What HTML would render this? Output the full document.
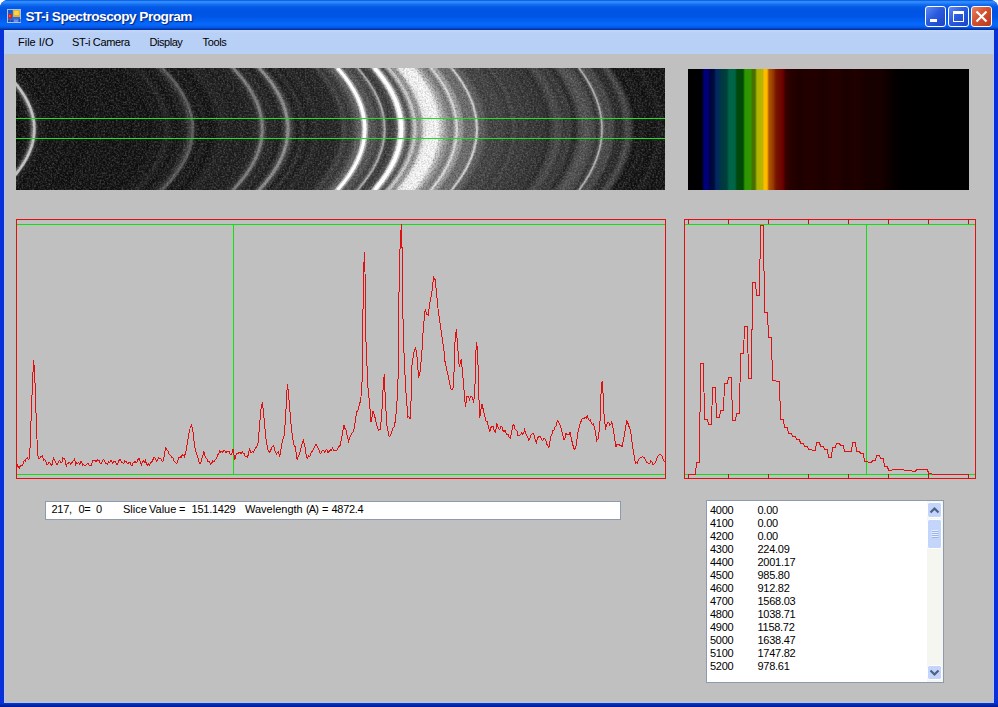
<!DOCTYPE html>
<html><head><meta charset="utf-8"><title>ST-i Spectroscopy Program</title>
<style>
html,body{margin:0;padding:0;}
body{width:998px;height:707px;overflow:hidden;background:#fff;font-family:"Liberation Sans",sans-serif;position:relative;}
#win{position:absolute;left:0;top:0;width:998px;height:707px;background:#0831d9;border-radius:8px 8px 0 0;overflow:hidden;}
#title{position:absolute;left:0;top:0;width:998px;height:30px;background:linear-gradient(to bottom,#0550d8 0%,#2c8cff 5%,#2a88fc 9%,#146ef0 15%,#0559e6 24%,#0054e3 36%,#0055e5 55%,#025ff2 68%,#0668fc 80%,#0562f4 87%,#0552dc 93%,#0038b4 97%,#002a9c 100%);}
#ttext{position:absolute;left:25.5px;top:8.4px;font-size:13.7px;font-weight:bold;color:#fff;text-shadow:1px 1px 1px #0a1f7a;white-space:nowrap;letter-spacing:-0.52px;line-height:18px;}
#client{position:absolute;left:4px;top:30px;width:990px;height:673px;background:#c0c0c0;}
#menu{position:absolute;left:4px;top:30px;width:990px;height:24px;background:linear-gradient(to bottom,#c6d8f8 0px,#b9d0f6 3px,#b8cff6 100%);}
.mi{position:absolute;top:36px;font-size:11px;color:#000;white-space:nowrap;line-height:13px;}
.tb{position:absolute;top:6px;width:21px;height:21px;box-sizing:border-box;border:1px solid #fff;border-radius:3px;}
#tbox{position:absolute;left:45px;top:501px;width:576px;height:19px;box-sizing:border-box;border:1px solid #8c9bb0;background:#fff;}
.w{position:absolute;top:503px;font-size:11px;line-height:13px;color:#000;white-space:nowrap;}
#list{position:absolute;left:706px;top:500px;width:238px;height:183px;box-sizing:border-box;border:1px solid #8c9bb0;background:#fff;overflow:hidden;}
.li{position:absolute;left:3px;letter-spacing:-0.27px;font-size:11px;line-height:13px;color:#000;white-space:nowrap;}
.li .a{position:absolute;left:0;}
.li .b{position:absolute;left:47.5px;}
svg{position:absolute;left:0;top:0;}
</style></head><body>
<div id="win">
<div id="title"></div>
<div id="client"></div>
<div style="position:absolute;left:0;top:703px;width:998px;height:4px;background:linear-gradient(to bottom,#0a3ad0,#0426b0 50%,#001a90)"></div>
<div style="position:absolute;left:4px;top:30px;width:1px;height:673px;background:#b0c4ee"></div><div style="position:absolute;left:4px;top:702px;width:990px;height:1px;background:#b0c4ee"></div><div style="position:absolute;left:993px;top:30px;width:1px;height:673px;background:#b0c4ee"></div>
<div id="menu"></div>
<div id="ttext">ST-i Spectroscopy Program</div>
<div class="mi" style="left:18px">File I/O</div>
<div class="mi" style="left:72px;letter-spacing:-0.36px">ST-i Camera</div>
<div class="mi" style="left:149.5px;letter-spacing:-0.45px">Display</div>
<div class="mi" style="left:202.5px;letter-spacing:-0.33px">Tools</div>
<div class="tb" style="left:925px;background:linear-gradient(135deg,#5f8bf0 0%,#2a5be0 45%,#1c44c4 100%)"></div>
<div class="tb" style="left:948px;background:linear-gradient(135deg,#5f8bf0 0%,#2a5be0 45%,#1c44c4 100%)"></div>
<div class="tb" style="left:971px;background:linear-gradient(135deg,#e8836a 0%,#d4502e 45%,#b8391d 100%)"></div>
<div id="tbox"></div>
<div class="w" style="left:51.5px;letter-spacing:-0.25px">217,</div>
<div class="w" style="left:78.5px;letter-spacing:-0.3px">0=</div>
<div class="w" style="left:96px">0</div>
<div class="w" style="left:123px">Slice</div>
<div class="w" style="left:149px">Value</div>
<div class="w" style="left:179px">=</div>
<div class="w" style="left:191.5px;letter-spacing:-0.24px">151.1429</div>
<div class="w" style="left:245px">Wavelength</div>
<div class="w" style="left:306px;letter-spacing:-0.9px">(A)</div>
<div class="w" style="left:322px">=</div>
<div class="w" style="left:331.5px;letter-spacing:-0.3px">4872.4</div>
<div id="list"><div class="li" style="top:3px"><span class="a">4000</span><span class="b">0.00</span></div><div class="li" style="top:16px"><span class="a">4100</span><span class="b">0.00</span></div><div class="li" style="top:29px"><span class="a">4200</span><span class="b">0.00</span></div><div class="li" style="top:42px"><span class="a">4300</span><span class="b">224.09</span></div><div class="li" style="top:55px"><span class="a">4400</span><span class="b">2001.17</span></div><div class="li" style="top:68px"><span class="a">4500</span><span class="b">985.80</span></div><div class="li" style="top:81px"><span class="a">4600</span><span class="b">912.82</span></div><div class="li" style="top:94px"><span class="a">4700</span><span class="b">1568.03</span></div><div class="li" style="top:107px"><span class="a">4800</span><span class="b">1038.71</span></div><div class="li" style="top:120px"><span class="a">4900</span><span class="b">1158.72</span></div><div class="li" style="top:133px"><span class="a">5000</span><span class="b">1638.47</span></div><div class="li" style="top:146px"><span class="a">5100</span><span class="b">1747.82</span></div><div class="li" style="top:159px"><span class="a">5200</span><span class="b">978.61</span></div></div>
<svg width="998" height="707" viewBox="0 0 998 707">
<defs>
<linearGradient id="sg" gradientUnits="userSpaceOnUse" x1="16" y1="0" x2="666" y2="0"><stop offset="0.0000" stop-color="rgb(15,15,15)"/><stop offset="0.0015" stop-color="rgb(14,14,14)"/><stop offset="0.0031" stop-color="rgb(11,11,11)"/><stop offset="0.0046" stop-color="rgb(10,10,10)"/><stop offset="0.0062" stop-color="rgb(10,10,10)"/><stop offset="0.0077" stop-color="rgb(12,12,12)"/><stop offset="0.0092" stop-color="rgb(13,13,13)"/><stop offset="0.0108" stop-color="rgb(15,15,15)"/><stop offset="0.0123" stop-color="rgb(16,16,16)"/><stop offset="0.0138" stop-color="rgb(18,18,18)"/><stop offset="0.0154" stop-color="rgb(20,20,20)"/><stop offset="0.0169" stop-color="rgb(21,21,21)"/><stop offset="0.0185" stop-color="rgb(22,22,22)"/><stop offset="0.0200" stop-color="rgb(28,28,28)"/><stop offset="0.0215" stop-color="rgb(46,46,46)"/><stop offset="0.0231" stop-color="rgb(77,77,77)"/><stop offset="0.0246" stop-color="rgb(115,115,115)"/><stop offset="0.0262" stop-color="rgb(144,144,144)"/><stop offset="0.0277" stop-color="rgb(150,150,150)"/><stop offset="0.0292" stop-color="rgb(130,130,130)"/><stop offset="0.0308" stop-color="rgb(93,93,93)"/><stop offset="0.0323" stop-color="rgb(56,56,56)"/><stop offset="0.0338" stop-color="rgb(33,33,33)"/><stop offset="0.0354" stop-color="rgb(24,24,24)"/><stop offset="0.0369" stop-color="rgb(23,23,23)"/><stop offset="0.0385" stop-color="rgb(25,25,25)"/><stop offset="0.0400" stop-color="rgb(25,25,25)"/><stop offset="0.0415" stop-color="rgb(23,23,23)"/><stop offset="0.0431" stop-color="rgb(21,21,21)"/><stop offset="0.0446" stop-color="rgb(18,18,18)"/><stop offset="0.0462" stop-color="rgb(17,17,17)"/><stop offset="0.0477" stop-color="rgb(15,15,15)"/><stop offset="0.0492" stop-color="rgb(15,15,15)"/><stop offset="0.0508" stop-color="rgb(15,15,15)"/><stop offset="0.0523" stop-color="rgb(15,15,15)"/><stop offset="0.0538" stop-color="rgb(14,14,14)"/><stop offset="0.0554" stop-color="rgb(15,15,15)"/><stop offset="0.0569" stop-color="rgb(18,18,18)"/><stop offset="0.0585" stop-color="rgb(20,20,20)"/><stop offset="0.0600" stop-color="rgb(19,19,19)"/><stop offset="0.0615" stop-color="rgb(16,16,16)"/><stop offset="0.0631" stop-color="rgb(16,16,16)"/><stop offset="0.0646" stop-color="rgb(16,16,16)"/><stop offset="0.0662" stop-color="rgb(17,17,17)"/><stop offset="0.0677" stop-color="rgb(17,17,17)"/><stop offset="0.0692" stop-color="rgb(17,17,17)"/><stop offset="0.0708" stop-color="rgb(20,20,20)"/><stop offset="0.0723" stop-color="rgb(21,21,21)"/><stop offset="0.0738" stop-color="rgb(21,21,21)"/><stop offset="0.0754" stop-color="rgb(18,18,18)"/><stop offset="0.0769" stop-color="rgb(15,15,15)"/><stop offset="0.0785" stop-color="rgb(13,13,13)"/><stop offset="0.0800" stop-color="rgb(14,14,14)"/><stop offset="0.0815" stop-color="rgb(15,15,15)"/><stop offset="0.0831" stop-color="rgb(15,15,15)"/><stop offset="0.0846" stop-color="rgb(16,16,16)"/><stop offset="0.0862" stop-color="rgb(17,17,17)"/><stop offset="0.0877" stop-color="rgb(20,20,20)"/><stop offset="0.0892" stop-color="rgb(20,20,20)"/><stop offset="0.0908" stop-color="rgb(18,18,18)"/><stop offset="0.0923" stop-color="rgb(15,15,15)"/><stop offset="0.0938" stop-color="rgb(14,14,14)"/><stop offset="0.0954" stop-color="rgb(15,15,15)"/><stop offset="0.0969" stop-color="rgb(15,15,15)"/><stop offset="0.0985" stop-color="rgb(15,15,15)"/><stop offset="0.1000" stop-color="rgb(16,16,16)"/><stop offset="0.1015" stop-color="rgb(16,16,16)"/><stop offset="0.1031" stop-color="rgb(15,15,15)"/><stop offset="0.1046" stop-color="rgb(14,14,14)"/><stop offset="0.1062" stop-color="rgb(13,13,13)"/><stop offset="0.1077" stop-color="rgb(14,14,14)"/><stop offset="0.1092" stop-color="rgb(13,13,13)"/><stop offset="0.1108" stop-color="rgb(13,13,13)"/><stop offset="0.1123" stop-color="rgb(13,13,13)"/><stop offset="0.1138" stop-color="rgb(13,13,13)"/><stop offset="0.1154" stop-color="rgb(14,14,14)"/><stop offset="0.1169" stop-color="rgb(16,16,16)"/><stop offset="0.1185" stop-color="rgb(18,18,18)"/><stop offset="0.1200" stop-color="rgb(19,19,19)"/><stop offset="0.1215" stop-color="rgb(19,19,19)"/><stop offset="0.1231" stop-color="rgb(18,18,18)"/><stop offset="0.1246" stop-color="rgb(18,18,18)"/><stop offset="0.1262" stop-color="rgb(18,18,18)"/><stop offset="0.1277" stop-color="rgb(17,17,17)"/><stop offset="0.1292" stop-color="rgb(17,17,17)"/><stop offset="0.1308" stop-color="rgb(17,17,17)"/><stop offset="0.1323" stop-color="rgb(18,18,18)"/><stop offset="0.1338" stop-color="rgb(19,19,19)"/><stop offset="0.1354" stop-color="rgb(19,19,19)"/><stop offset="0.1369" stop-color="rgb(18,18,18)"/><stop offset="0.1385" stop-color="rgb(17,17,17)"/><stop offset="0.1400" stop-color="rgb(16,16,16)"/><stop offset="0.1415" stop-color="rgb(17,17,17)"/><stop offset="0.1431" stop-color="rgb(17,17,17)"/><stop offset="0.1446" stop-color="rgb(18,18,18)"/><stop offset="0.1462" stop-color="rgb(17,17,17)"/><stop offset="0.1477" stop-color="rgb(17,17,17)"/><stop offset="0.1492" stop-color="rgb(16,16,16)"/><stop offset="0.1508" stop-color="rgb(16,16,16)"/><stop offset="0.1523" stop-color="rgb(16,16,16)"/><stop offset="0.1538" stop-color="rgb(15,15,15)"/><stop offset="0.1554" stop-color="rgb(15,15,15)"/><stop offset="0.1569" stop-color="rgb(17,17,17)"/><stop offset="0.1585" stop-color="rgb(18,18,18)"/><stop offset="0.1600" stop-color="rgb(19,19,19)"/><stop offset="0.1615" stop-color="rgb(19,19,19)"/><stop offset="0.1631" stop-color="rgb(17,17,17)"/><stop offset="0.1646" stop-color="rgb(17,17,17)"/><stop offset="0.1662" stop-color="rgb(17,17,17)"/><stop offset="0.1677" stop-color="rgb(17,17,17)"/><stop offset="0.1692" stop-color="rgb(17,17,17)"/><stop offset="0.1708" stop-color="rgb(16,16,16)"/><stop offset="0.1723" stop-color="rgb(16,16,16)"/><stop offset="0.1738" stop-color="rgb(16,16,16)"/><stop offset="0.1754" stop-color="rgb(15,15,15)"/><stop offset="0.1769" stop-color="rgb(14,14,14)"/><stop offset="0.1785" stop-color="rgb(14,14,14)"/><stop offset="0.1800" stop-color="rgb(15,15,15)"/><stop offset="0.1815" stop-color="rgb(17,17,17)"/><stop offset="0.1831" stop-color="rgb(18,18,18)"/><stop offset="0.1846" stop-color="rgb(18,18,18)"/><stop offset="0.1862" stop-color="rgb(18,18,18)"/><stop offset="0.1877" stop-color="rgb(19,19,19)"/><stop offset="0.1892" stop-color="rgb(19,19,19)"/><stop offset="0.1908" stop-color="rgb(18,18,18)"/><stop offset="0.1923" stop-color="rgb(15,15,15)"/><stop offset="0.1938" stop-color="rgb(15,15,15)"/><stop offset="0.1954" stop-color="rgb(17,17,17)"/><stop offset="0.1969" stop-color="rgb(19,19,19)"/><stop offset="0.1985" stop-color="rgb(19,19,19)"/><stop offset="0.2000" stop-color="rgb(17,17,17)"/><stop offset="0.2015" stop-color="rgb(15,15,15)"/><stop offset="0.2031" stop-color="rgb(13,13,13)"/><stop offset="0.2046" stop-color="rgb(13,13,13)"/><stop offset="0.2062" stop-color="rgb(14,14,14)"/><stop offset="0.2077" stop-color="rgb(16,16,16)"/><stop offset="0.2092" stop-color="rgb(19,19,19)"/><stop offset="0.2108" stop-color="rgb(21,21,21)"/><stop offset="0.2123" stop-color="rgb(22,22,22)"/><stop offset="0.2138" stop-color="rgb(22,22,22)"/><stop offset="0.2154" stop-color="rgb(21,21,21)"/><stop offset="0.2169" stop-color="rgb(21,21,21)"/><stop offset="0.2185" stop-color="rgb(21,21,21)"/><stop offset="0.2200" stop-color="rgb(21,21,21)"/><stop offset="0.2215" stop-color="rgb(21,21,21)"/><stop offset="0.2231" stop-color="rgb(20,20,20)"/><stop offset="0.2246" stop-color="rgb(20,20,20)"/><stop offset="0.2262" stop-color="rgb(21,21,21)"/><stop offset="0.2277" stop-color="rgb(26,26,26)"/><stop offset="0.2292" stop-color="rgb(32,32,32)"/><stop offset="0.2308" stop-color="rgb(35,35,35)"/><stop offset="0.2323" stop-color="rgb(35,35,35)"/><stop offset="0.2338" stop-color="rgb(32,32,32)"/><stop offset="0.2354" stop-color="rgb(30,30,30)"/><stop offset="0.2369" stop-color="rgb(28,28,28)"/><stop offset="0.2385" stop-color="rgb(26,26,26)"/><stop offset="0.2400" stop-color="rgb(24,24,24)"/><stop offset="0.2415" stop-color="rgb(22,22,22)"/><stop offset="0.2431" stop-color="rgb(20,20,20)"/><stop offset="0.2446" stop-color="rgb(17,17,17)"/><stop offset="0.2462" stop-color="rgb(16,16,16)"/><stop offset="0.2477" stop-color="rgb(17,17,17)"/><stop offset="0.2492" stop-color="rgb(20,20,20)"/><stop offset="0.2508" stop-color="rgb(23,23,23)"/><stop offset="0.2523" stop-color="rgb(25,25,25)"/><stop offset="0.2538" stop-color="rgb(26,26,26)"/><stop offset="0.2554" stop-color="rgb(27,27,27)"/><stop offset="0.2569" stop-color="rgb(26,26,26)"/><stop offset="0.2585" stop-color="rgb(27,27,27)"/><stop offset="0.2600" stop-color="rgb(29,29,29)"/><stop offset="0.2615" stop-color="rgb(35,35,35)"/><stop offset="0.2631" stop-color="rgb(43,43,43)"/><stop offset="0.2646" stop-color="rgb(51,51,51)"/><stop offset="0.2662" stop-color="rgb(60,60,60)"/><stop offset="0.2677" stop-color="rgb(66,66,66)"/><stop offset="0.2692" stop-color="rgb(69,69,69)"/><stop offset="0.2708" stop-color="rgb(68,68,68)"/><stop offset="0.2723" stop-color="rgb(60,60,60)"/><stop offset="0.2738" stop-color="rgb(49,49,49)"/><stop offset="0.2754" stop-color="rgb(39,39,39)"/><stop offset="0.2769" stop-color="rgb(32,32,32)"/><stop offset="0.2785" stop-color="rgb(27,27,27)"/><stop offset="0.2800" stop-color="rgb(22,22,22)"/><stop offset="0.2815" stop-color="rgb(19,19,19)"/><stop offset="0.2831" stop-color="rgb(17,17,17)"/><stop offset="0.2846" stop-color="rgb(19,19,19)"/><stop offset="0.2862" stop-color="rgb(22,22,22)"/><stop offset="0.2877" stop-color="rgb(27,27,27)"/><stop offset="0.2892" stop-color="rgb(28,28,28)"/><stop offset="0.2908" stop-color="rgb(27,27,27)"/><stop offset="0.2923" stop-color="rgb(24,24,24)"/><stop offset="0.2938" stop-color="rgb(22,22,22)"/><stop offset="0.2954" stop-color="rgb(20,20,20)"/><stop offset="0.2969" stop-color="rgb(18,18,18)"/><stop offset="0.2985" stop-color="rgb(16,16,16)"/><stop offset="0.3000" stop-color="rgb(16,16,16)"/><stop offset="0.3015" stop-color="rgb(17,17,17)"/><stop offset="0.3031" stop-color="rgb(18,18,18)"/><stop offset="0.3046" stop-color="rgb(19,19,19)"/><stop offset="0.3062" stop-color="rgb(21,21,21)"/><stop offset="0.3077" stop-color="rgb(23,23,23)"/><stop offset="0.3092" stop-color="rgb(26,26,26)"/><stop offset="0.3108" stop-color="rgb(29,29,29)"/><stop offset="0.3123" stop-color="rgb(32,32,32)"/><stop offset="0.3138" stop-color="rgb(33,33,33)"/><stop offset="0.3154" stop-color="rgb(33,33,33)"/><stop offset="0.3169" stop-color="rgb(33,33,33)"/><stop offset="0.3185" stop-color="rgb(33,33,33)"/><stop offset="0.3200" stop-color="rgb(33,33,33)"/><stop offset="0.3215" stop-color="rgb(32,32,32)"/><stop offset="0.3231" stop-color="rgb(32,32,32)"/><stop offset="0.3246" stop-color="rgb(32,32,32)"/><stop offset="0.3262" stop-color="rgb(31,31,31)"/><stop offset="0.3277" stop-color="rgb(31,31,31)"/><stop offset="0.3292" stop-color="rgb(29,29,29)"/><stop offset="0.3308" stop-color="rgb(29,29,29)"/><stop offset="0.3323" stop-color="rgb(32,32,32)"/><stop offset="0.3338" stop-color="rgb(31,31,31)"/><stop offset="0.3354" stop-color="rgb(28,28,28)"/><stop offset="0.3369" stop-color="rgb(26,26,26)"/><stop offset="0.3385" stop-color="rgb(26,26,26)"/><stop offset="0.3400" stop-color="rgb(28,28,28)"/><stop offset="0.3415" stop-color="rgb(29,29,29)"/><stop offset="0.3431" stop-color="rgb(30,30,30)"/><stop offset="0.3446" stop-color="rgb(31,31,31)"/><stop offset="0.3462" stop-color="rgb(31,31,31)"/><stop offset="0.3477" stop-color="rgb(32,32,32)"/><stop offset="0.3492" stop-color="rgb(31,31,31)"/><stop offset="0.3508" stop-color="rgb(29,29,29)"/><stop offset="0.3523" stop-color="rgb(27,27,27)"/><stop offset="0.3538" stop-color="rgb(26,26,26)"/><stop offset="0.3554" stop-color="rgb(26,26,26)"/><stop offset="0.3569" stop-color="rgb(29,29,29)"/><stop offset="0.3585" stop-color="rgb(32,32,32)"/><stop offset="0.3600" stop-color="rgb(33,33,33)"/><stop offset="0.3615" stop-color="rgb(33,33,33)"/><stop offset="0.3631" stop-color="rgb(32,32,32)"/><stop offset="0.3646" stop-color="rgb(33,33,33)"/><stop offset="0.3662" stop-color="rgb(34,34,34)"/><stop offset="0.3677" stop-color="rgb(35,35,35)"/><stop offset="0.3692" stop-color="rgb(38,38,38)"/><stop offset="0.3708" stop-color="rgb(41,41,41)"/><stop offset="0.3723" stop-color="rgb(49,49,49)"/><stop offset="0.3738" stop-color="rgb(62,62,62)"/><stop offset="0.3754" stop-color="rgb(79,79,79)"/><stop offset="0.3769" stop-color="rgb(94,94,94)"/><stop offset="0.3785" stop-color="rgb(100,100,100)"/><stop offset="0.3800" stop-color="rgb(95,95,95)"/><stop offset="0.3815" stop-color="rgb(83,83,83)"/><stop offset="0.3831" stop-color="rgb(68,68,68)"/><stop offset="0.3846" stop-color="rgb(54,54,54)"/><stop offset="0.3862" stop-color="rgb(43,43,43)"/><stop offset="0.3877" stop-color="rgb(37,37,37)"/><stop offset="0.3892" stop-color="rgb(34,34,34)"/><stop offset="0.3908" stop-color="rgb(34,34,34)"/><stop offset="0.3923" stop-color="rgb(36,36,36)"/><stop offset="0.3938" stop-color="rgb(39,39,39)"/><stop offset="0.3954" stop-color="rgb(40,40,40)"/><stop offset="0.3969" stop-color="rgb(38,38,38)"/><stop offset="0.3985" stop-color="rgb(35,35,35)"/><stop offset="0.4000" stop-color="rgb(32,32,32)"/><stop offset="0.4015" stop-color="rgb(31,31,31)"/><stop offset="0.4031" stop-color="rgb(30,30,30)"/><stop offset="0.4046" stop-color="rgb(29,29,29)"/><stop offset="0.4062" stop-color="rgb(31,31,31)"/><stop offset="0.4077" stop-color="rgb(36,36,36)"/><stop offset="0.4092" stop-color="rgb(45,45,45)"/><stop offset="0.4108" stop-color="rgb(51,51,51)"/><stop offset="0.4123" stop-color="rgb(60,60,60)"/><stop offset="0.4138" stop-color="rgb(75,75,75)"/><stop offset="0.4154" stop-color="rgb(98,98,98)"/><stop offset="0.4169" stop-color="rgb(116,116,116)"/><stop offset="0.4185" stop-color="rgb(121,121,121)"/><stop offset="0.4200" stop-color="rgb(110,110,110)"/><stop offset="0.4215" stop-color="rgb(93,93,93)"/><stop offset="0.4231" stop-color="rgb(76,76,76)"/><stop offset="0.4246" stop-color="rgb(62,62,62)"/><stop offset="0.4262" stop-color="rgb(52,52,52)"/><stop offset="0.4277" stop-color="rgb(45,45,45)"/><stop offset="0.4292" stop-color="rgb(39,39,39)"/><stop offset="0.4308" stop-color="rgb(31,31,31)"/><stop offset="0.4323" stop-color="rgb(25,25,25)"/><stop offset="0.4338" stop-color="rgb(24,24,24)"/><stop offset="0.4354" stop-color="rgb(28,28,28)"/><stop offset="0.4369" stop-color="rgb(33,33,33)"/><stop offset="0.4385" stop-color="rgb(38,38,38)"/><stop offset="0.4400" stop-color="rgb(43,43,43)"/><stop offset="0.4415" stop-color="rgb(46,46,46)"/><stop offset="0.4431" stop-color="rgb(44,44,44)"/><stop offset="0.4446" stop-color="rgb(38,38,38)"/><stop offset="0.4462" stop-color="rgb(31,31,31)"/><stop offset="0.4477" stop-color="rgb(27,27,27)"/><stop offset="0.4492" stop-color="rgb(26,26,26)"/><stop offset="0.4508" stop-color="rgb(27,27,27)"/><stop offset="0.4523" stop-color="rgb(28,28,28)"/><stop offset="0.4538" stop-color="rgb(30,30,30)"/><stop offset="0.4554" stop-color="rgb(32,32,32)"/><stop offset="0.4569" stop-color="rgb(35,35,35)"/><stop offset="0.4585" stop-color="rgb(38,38,38)"/><stop offset="0.4600" stop-color="rgb(40,40,40)"/><stop offset="0.4615" stop-color="rgb(42,42,42)"/><stop offset="0.4631" stop-color="rgb(41,41,41)"/><stop offset="0.4646" stop-color="rgb(39,39,39)"/><stop offset="0.4662" stop-color="rgb(36,36,36)"/><stop offset="0.4677" stop-color="rgb(33,33,33)"/><stop offset="0.4692" stop-color="rgb(31,31,31)"/><stop offset="0.4708" stop-color="rgb(32,32,32)"/><stop offset="0.4723" stop-color="rgb(33,33,33)"/><stop offset="0.4738" stop-color="rgb(32,32,32)"/><stop offset="0.4754" stop-color="rgb(32,32,32)"/><stop offset="0.4769" stop-color="rgb(33,33,33)"/><stop offset="0.4785" stop-color="rgb(34,34,34)"/><stop offset="0.4800" stop-color="rgb(34,34,34)"/><stop offset="0.4815" stop-color="rgb(34,34,34)"/><stop offset="0.4831" stop-color="rgb(35,35,35)"/><stop offset="0.4846" stop-color="rgb(37,37,37)"/><stop offset="0.4862" stop-color="rgb(37,37,37)"/><stop offset="0.4877" stop-color="rgb(37,37,37)"/><stop offset="0.4892" stop-color="rgb(36,36,36)"/><stop offset="0.4908" stop-color="rgb(35,35,35)"/><stop offset="0.4923" stop-color="rgb(35,35,35)"/><stop offset="0.4938" stop-color="rgb(36,36,36)"/><stop offset="0.4954" stop-color="rgb(37,37,37)"/><stop offset="0.4969" stop-color="rgb(39,39,39)"/><stop offset="0.4985" stop-color="rgb(43,43,43)"/><stop offset="0.5000" stop-color="rgb(49,49,49)"/><stop offset="0.5015" stop-color="rgb(57,57,57)"/><stop offset="0.5031" stop-color="rgb(64,64,64)"/><stop offset="0.5046" stop-color="rgb(68,68,68)"/><stop offset="0.5062" stop-color="rgb(68,68,68)"/><stop offset="0.5077" stop-color="rgb(64,64,64)"/><stop offset="0.5092" stop-color="rgb(58,58,58)"/><stop offset="0.5108" stop-color="rgb(53,53,53)"/><stop offset="0.5123" stop-color="rgb(52,52,52)"/><stop offset="0.5138" stop-color="rgb(54,54,54)"/><stop offset="0.5154" stop-color="rgb(58,58,58)"/><stop offset="0.5169" stop-color="rgb(61,61,61)"/><stop offset="0.5185" stop-color="rgb(64,64,64)"/><stop offset="0.5200" stop-color="rgb(69,69,69)"/><stop offset="0.5215" stop-color="rgb(76,76,76)"/><stop offset="0.5231" stop-color="rgb(85,85,85)"/><stop offset="0.5246" stop-color="rgb(92,92,92)"/><stop offset="0.5262" stop-color="rgb(97,97,97)"/><stop offset="0.5277" stop-color="rgb(101,101,101)"/><stop offset="0.5292" stop-color="rgb(107,107,107)"/><stop offset="0.5308" stop-color="rgb(119,119,119)"/><stop offset="0.5323" stop-color="rgb(166,166,166)"/><stop offset="0.5338" stop-color="rgb(212,212,212)"/><stop offset="0.5354" stop-color="rgb(252,252,252)"/><stop offset="0.5369" stop-color="rgb(236,236,236)"/><stop offset="0.5385" stop-color="rgb(205,205,205)"/><stop offset="0.5400" stop-color="rgb(163,163,163)"/><stop offset="0.5415" stop-color="rgb(135,135,135)"/><stop offset="0.5431" stop-color="rgb(113,113,113)"/><stop offset="0.5446" stop-color="rgb(96,96,96)"/><stop offset="0.5462" stop-color="rgb(86,86,86)"/><stop offset="0.5477" stop-color="rgb(85,85,85)"/><stop offset="0.5492" stop-color="rgb(89,89,89)"/><stop offset="0.5508" stop-color="rgb(89,89,89)"/><stop offset="0.5523" stop-color="rgb(83,83,83)"/><stop offset="0.5538" stop-color="rgb(78,78,78)"/><stop offset="0.5554" stop-color="rgb(72,72,72)"/><stop offset="0.5569" stop-color="rgb(69,69,69)"/><stop offset="0.5585" stop-color="rgb(67,67,67)"/><stop offset="0.5600" stop-color="rgb(70,70,70)"/><stop offset="0.5615" stop-color="rgb(80,80,80)"/><stop offset="0.5631" stop-color="rgb(99,99,99)"/><stop offset="0.5646" stop-color="rgb(121,121,121)"/><stop offset="0.5662" stop-color="rgb(130,130,130)"/><stop offset="0.5677" stop-color="rgb(120,120,120)"/><stop offset="0.5692" stop-color="rgb(96,96,96)"/><stop offset="0.5708" stop-color="rgb(76,76,76)"/><stop offset="0.5723" stop-color="rgb(63,63,63)"/><stop offset="0.5738" stop-color="rgb(59,59,59)"/><stop offset="0.5754" stop-color="rgb(58,58,58)"/><stop offset="0.5769" stop-color="rgb(60,60,60)"/><stop offset="0.5785" stop-color="rgb(63,63,63)"/><stop offset="0.5800" stop-color="rgb(66,66,66)"/><stop offset="0.5815" stop-color="rgb(70,70,70)"/><stop offset="0.5831" stop-color="rgb(78,78,78)"/><stop offset="0.5846" stop-color="rgb(91,91,91)"/><stop offset="0.5862" stop-color="rgb(113,113,113)"/><stop offset="0.5877" stop-color="rgb(168,168,168)"/><stop offset="0.5892" stop-color="rgb(217,217,217)"/><stop offset="0.5908" stop-color="rgb(255,255,255)"/><stop offset="0.5923" stop-color="rgb(255,255,255)"/><stop offset="0.5938" stop-color="rgb(247,247,247)"/><stop offset="0.5954" stop-color="rgb(223,223,223)"/><stop offset="0.5969" stop-color="rgb(187,187,187)"/><stop offset="0.5985" stop-color="rgb(150,150,150)"/><stop offset="0.6000" stop-color="rgb(124,124,124)"/><stop offset="0.6015" stop-color="rgb(103,103,103)"/><stop offset="0.6031" stop-color="rgb(90,90,90)"/><stop offset="0.6046" stop-color="rgb(83,83,83)"/><stop offset="0.6062" stop-color="rgb(91,91,91)"/><stop offset="0.6077" stop-color="rgb(117,117,117)"/><stop offset="0.6092" stop-color="rgb(148,148,148)"/><stop offset="0.6108" stop-color="rgb(173,173,173)"/><stop offset="0.6123" stop-color="rgb(180,180,180)"/><stop offset="0.6138" stop-color="rgb(184,184,184)"/><stop offset="0.6154" stop-color="rgb(182,182,182)"/><stop offset="0.6169" stop-color="rgb(172,172,172)"/><stop offset="0.6185" stop-color="rgb(159,159,159)"/><stop offset="0.6200" stop-color="rgb(151,151,151)"/><stop offset="0.6215" stop-color="rgb(155,155,155)"/><stop offset="0.6231" stop-color="rgb(168,168,168)"/><stop offset="0.6246" stop-color="rgb(187,187,187)"/><stop offset="0.6262" stop-color="rgb(208,208,208)"/><stop offset="0.6277" stop-color="rgb(227,227,227)"/><stop offset="0.6292" stop-color="rgb(238,238,238)"/><stop offset="0.6308" stop-color="rgb(241,241,241)"/><stop offset="0.6323" stop-color="rgb(239,239,239)"/><stop offset="0.6338" stop-color="rgb(241,241,241)"/><stop offset="0.6354" stop-color="rgb(246,246,246)"/><stop offset="0.6369" stop-color="rgb(252,252,252)"/><stop offset="0.6385" stop-color="rgb(255,255,255)"/><stop offset="0.6400" stop-color="rgb(255,255,255)"/><stop offset="0.6415" stop-color="rgb(255,255,255)"/><stop offset="0.6431" stop-color="rgb(255,255,255)"/><stop offset="0.6446" stop-color="rgb(255,255,255)"/><stop offset="0.6462" stop-color="rgb(255,255,255)"/><stop offset="0.6477" stop-color="rgb(252,252,252)"/><stop offset="0.6492" stop-color="rgb(246,246,246)"/><stop offset="0.6508" stop-color="rgb(237,237,237)"/><stop offset="0.6523" stop-color="rgb(226,226,226)"/><stop offset="0.6538" stop-color="rgb(216,216,216)"/><stop offset="0.6554" stop-color="rgb(205,205,205)"/><stop offset="0.6569" stop-color="rgb(194,194,194)"/><stop offset="0.6585" stop-color="rgb(182,182,182)"/><stop offset="0.6600" stop-color="rgb(171,171,171)"/><stop offset="0.6615" stop-color="rgb(161,161,161)"/><stop offset="0.6631" stop-color="rgb(154,154,154)"/><stop offset="0.6646" stop-color="rgb(147,147,147)"/><stop offset="0.6662" stop-color="rgb(140,140,140)"/><stop offset="0.6677" stop-color="rgb(133,133,133)"/><stop offset="0.6692" stop-color="rgb(129,129,129)"/><stop offset="0.6708" stop-color="rgb(127,127,127)"/><stop offset="0.6723" stop-color="rgb(135,135,135)"/><stop offset="0.6738" stop-color="rgb(158,158,158)"/><stop offset="0.6754" stop-color="rgb(186,186,186)"/><stop offset="0.6769" stop-color="rgb(204,204,204)"/><stop offset="0.6785" stop-color="rgb(200,200,200)"/><stop offset="0.6800" stop-color="rgb(184,184,184)"/><stop offset="0.6815" stop-color="rgb(171,171,171)"/><stop offset="0.6831" stop-color="rgb(166,166,166)"/><stop offset="0.6846" stop-color="rgb(164,164,164)"/><stop offset="0.6862" stop-color="rgb(157,157,157)"/><stop offset="0.6877" stop-color="rgb(143,143,143)"/><stop offset="0.6892" stop-color="rgb(125,125,125)"/><stop offset="0.6908" stop-color="rgb(113,113,113)"/><stop offset="0.6923" stop-color="rgb(109,109,109)"/><stop offset="0.6938" stop-color="rgb(112,112,112)"/><stop offset="0.6954" stop-color="rgb(114,114,114)"/><stop offset="0.6969" stop-color="rgb(112,112,112)"/><stop offset="0.6985" stop-color="rgb(113,113,113)"/><stop offset="0.7000" stop-color="rgb(113,113,113)"/><stop offset="0.7015" stop-color="rgb(112,112,112)"/><stop offset="0.7031" stop-color="rgb(111,111,111)"/><stop offset="0.7046" stop-color="rgb(118,118,118)"/><stop offset="0.7062" stop-color="rgb(143,143,143)"/><stop offset="0.7077" stop-color="rgb(170,170,170)"/><stop offset="0.7092" stop-color="rgb(180,180,180)"/><stop offset="0.7108" stop-color="rgb(155,155,155)"/><stop offset="0.7123" stop-color="rgb(120,120,120)"/><stop offset="0.7138" stop-color="rgb(98,98,98)"/><stop offset="0.7154" stop-color="rgb(95,95,95)"/><stop offset="0.7169" stop-color="rgb(99,99,99)"/><stop offset="0.7185" stop-color="rgb(97,97,97)"/><stop offset="0.7200" stop-color="rgb(91,91,91)"/><stop offset="0.7215" stop-color="rgb(85,85,85)"/><stop offset="0.7231" stop-color="rgb(80,80,80)"/><stop offset="0.7246" stop-color="rgb(76,76,76)"/><stop offset="0.7262" stop-color="rgb(72,72,72)"/><stop offset="0.7277" stop-color="rgb(67,67,67)"/><stop offset="0.7292" stop-color="rgb(65,65,65)"/><stop offset="0.7308" stop-color="rgb(67,67,67)"/><stop offset="0.7323" stop-color="rgb(69,69,69)"/><stop offset="0.7338" stop-color="rgb(68,68,68)"/><stop offset="0.7354" stop-color="rgb(65,65,65)"/><stop offset="0.7369" stop-color="rgb(65,65,65)"/><stop offset="0.7385" stop-color="rgb(68,68,68)"/><stop offset="0.7400" stop-color="rgb(70,70,70)"/><stop offset="0.7415" stop-color="rgb(70,70,70)"/><stop offset="0.7431" stop-color="rgb(68,68,68)"/><stop offset="0.7446" stop-color="rgb(67,67,67)"/><stop offset="0.7462" stop-color="rgb(68,68,68)"/><stop offset="0.7477" stop-color="rgb(68,68,68)"/><stop offset="0.7492" stop-color="rgb(66,66,66)"/><stop offset="0.7508" stop-color="rgb(64,64,64)"/><stop offset="0.7523" stop-color="rgb(62,62,62)"/><stop offset="0.7538" stop-color="rgb(60,60,60)"/><stop offset="0.7554" stop-color="rgb(59,59,59)"/><stop offset="0.7569" stop-color="rgb(58,58,58)"/><stop offset="0.7585" stop-color="rgb(56,56,56)"/><stop offset="0.7600" stop-color="rgb(56,56,56)"/><stop offset="0.7615" stop-color="rgb(59,59,59)"/><stop offset="0.7631" stop-color="rgb(64,64,64)"/><stop offset="0.7646" stop-color="rgb(69,69,69)"/><stop offset="0.7662" stop-color="rgb(70,70,70)"/><stop offset="0.7677" stop-color="rgb(69,69,69)"/><stop offset="0.7692" stop-color="rgb(65,65,65)"/><stop offset="0.7708" stop-color="rgb(61,61,61)"/><stop offset="0.7723" stop-color="rgb(58,58,58)"/><stop offset="0.7738" stop-color="rgb(57,57,57)"/><stop offset="0.7754" stop-color="rgb(58,58,58)"/><stop offset="0.7769" stop-color="rgb(58,58,58)"/><stop offset="0.7785" stop-color="rgb(59,59,59)"/><stop offset="0.7800" stop-color="rgb(61,61,61)"/><stop offset="0.7815" stop-color="rgb(62,62,62)"/><stop offset="0.7831" stop-color="rgb(62,62,62)"/><stop offset="0.7846" stop-color="rgb(60,60,60)"/><stop offset="0.7862" stop-color="rgb(56,56,56)"/><stop offset="0.7877" stop-color="rgb(53,53,53)"/><stop offset="0.7892" stop-color="rgb(52,52,52)"/><stop offset="0.7908" stop-color="rgb(54,54,54)"/><stop offset="0.7923" stop-color="rgb(57,57,57)"/><stop offset="0.7938" stop-color="rgb(58,58,58)"/><stop offset="0.7954" stop-color="rgb(58,58,58)"/><stop offset="0.7969" stop-color="rgb(56,56,56)"/><stop offset="0.7985" stop-color="rgb(53,53,53)"/><stop offset="0.8000" stop-color="rgb(50,50,50)"/><stop offset="0.8015" stop-color="rgb(50,50,50)"/><stop offset="0.8031" stop-color="rgb(52,52,52)"/><stop offset="0.8046" stop-color="rgb(54,54,54)"/><stop offset="0.8062" stop-color="rgb(54,54,54)"/><stop offset="0.8077" stop-color="rgb(53,53,53)"/><stop offset="0.8092" stop-color="rgb(51,51,51)"/><stop offset="0.8108" stop-color="rgb(51,51,51)"/><stop offset="0.8123" stop-color="rgb(51,51,51)"/><stop offset="0.8138" stop-color="rgb(50,50,50)"/><stop offset="0.8154" stop-color="rgb(47,47,47)"/><stop offset="0.8169" stop-color="rgb(43,43,43)"/><stop offset="0.8185" stop-color="rgb(41,41,41)"/><stop offset="0.8200" stop-color="rgb(43,43,43)"/><stop offset="0.8215" stop-color="rgb(48,48,48)"/><stop offset="0.8231" stop-color="rgb(55,55,55)"/><stop offset="0.8246" stop-color="rgb(60,60,60)"/><stop offset="0.8262" stop-color="rgb(64,64,64)"/><stop offset="0.8277" stop-color="rgb(67,67,67)"/><stop offset="0.8292" stop-color="rgb(70,70,70)"/><stop offset="0.8308" stop-color="rgb(73,73,73)"/><stop offset="0.8323" stop-color="rgb(76,76,76)"/><stop offset="0.8338" stop-color="rgb(76,76,76)"/><stop offset="0.8354" stop-color="rgb(75,75,75)"/><stop offset="0.8369" stop-color="rgb(71,71,71)"/><stop offset="0.8385" stop-color="rgb(67,67,67)"/><stop offset="0.8400" stop-color="rgb(62,62,62)"/><stop offset="0.8415" stop-color="rgb(56,56,56)"/><stop offset="0.8431" stop-color="rgb(54,54,54)"/><stop offset="0.8446" stop-color="rgb(55,55,55)"/><stop offset="0.8462" stop-color="rgb(58,58,58)"/><stop offset="0.8477" stop-color="rgb(59,59,59)"/><stop offset="0.8492" stop-color="rgb(59,59,59)"/><stop offset="0.8508" stop-color="rgb(60,60,60)"/><stop offset="0.8523" stop-color="rgb(59,59,59)"/><stop offset="0.8538" stop-color="rgb(55,55,55)"/><stop offset="0.8554" stop-color="rgb(48,48,48)"/><stop offset="0.8569" stop-color="rgb(42,42,42)"/><stop offset="0.8585" stop-color="rgb(39,39,39)"/><stop offset="0.8600" stop-color="rgb(39,39,39)"/><stop offset="0.8615" stop-color="rgb(44,44,44)"/><stop offset="0.8631" stop-color="rgb(51,51,51)"/><stop offset="0.8646" stop-color="rgb(60,60,60)"/><stop offset="0.8662" stop-color="rgb(67,67,67)"/><stop offset="0.8677" stop-color="rgb(73,73,73)"/><stop offset="0.8692" stop-color="rgb(77,77,77)"/><stop offset="0.8708" stop-color="rgb(80,80,80)"/><stop offset="0.8723" stop-color="rgb(82,82,82)"/><stop offset="0.8738" stop-color="rgb(83,83,83)"/><stop offset="0.8754" stop-color="rgb(84,84,84)"/><stop offset="0.8769" stop-color="rgb(85,85,85)"/><stop offset="0.8785" stop-color="rgb(85,85,85)"/><stop offset="0.8800" stop-color="rgb(83,83,83)"/><stop offset="0.8815" stop-color="rgb(80,80,80)"/><stop offset="0.8831" stop-color="rgb(78,78,78)"/><stop offset="0.8846" stop-color="rgb(76,76,76)"/><stop offset="0.8862" stop-color="rgb(75,75,75)"/><stop offset="0.8877" stop-color="rgb(73,73,73)"/><stop offset="0.8892" stop-color="rgb(70,70,70)"/><stop offset="0.8908" stop-color="rgb(64,64,64)"/><stop offset="0.8923" stop-color="rgb(57,57,57)"/><stop offset="0.8938" stop-color="rgb(52,52,52)"/><stop offset="0.8954" stop-color="rgb(54,54,54)"/><stop offset="0.8969" stop-color="rgb(64,64,64)"/><stop offset="0.8985" stop-color="rgb(86,86,86)"/><stop offset="0.9000" stop-color="rgb(111,111,111)"/><stop offset="0.9015" stop-color="rgb(125,125,125)"/><stop offset="0.9031" stop-color="rgb(115,115,115)"/><stop offset="0.9046" stop-color="rgb(95,95,95)"/><stop offset="0.9062" stop-color="rgb(78,78,78)"/><stop offset="0.9077" stop-color="rgb(73,73,73)"/><stop offset="0.9092" stop-color="rgb(73,73,73)"/><stop offset="0.9108" stop-color="rgb(75,75,75)"/><stop offset="0.9123" stop-color="rgb(74,74,74)"/><stop offset="0.9138" stop-color="rgb(74,74,74)"/><stop offset="0.9154" stop-color="rgb(74,74,74)"/><stop offset="0.9169" stop-color="rgb(73,73,73)"/><stop offset="0.9185" stop-color="rgb(68,68,68)"/><stop offset="0.9200" stop-color="rgb(59,59,59)"/><stop offset="0.9215" stop-color="rgb(50,50,50)"/><stop offset="0.9231" stop-color="rgb(44,44,44)"/><stop offset="0.9246" stop-color="rgb(42,42,42)"/><stop offset="0.9262" stop-color="rgb(42,42,42)"/><stop offset="0.9277" stop-color="rgb(42,42,42)"/><stop offset="0.9292" stop-color="rgb(42,42,42)"/><stop offset="0.9308" stop-color="rgb(41,41,41)"/><stop offset="0.9323" stop-color="rgb(43,43,43)"/><stop offset="0.9338" stop-color="rgb(47,47,47)"/><stop offset="0.9354" stop-color="rgb(55,55,55)"/><stop offset="0.9369" stop-color="rgb(63,63,63)"/><stop offset="0.9385" stop-color="rgb(71,71,71)"/><stop offset="0.9400" stop-color="rgb(74,74,74)"/><stop offset="0.9415" stop-color="rgb(74,74,74)"/><stop offset="0.9431" stop-color="rgb(70,70,70)"/><stop offset="0.9446" stop-color="rgb(65,65,65)"/><stop offset="0.9462" stop-color="rgb(58,58,58)"/><stop offset="0.9477" stop-color="rgb(48,48,48)"/><stop offset="0.9492" stop-color="rgb(37,37,37)"/><stop offset="0.9508" stop-color="rgb(27,27,27)"/><stop offset="0.9523" stop-color="rgb(20,20,20)"/><stop offset="0.9538" stop-color="rgb(16,16,16)"/><stop offset="0.9554" stop-color="rgb(16,16,16)"/><stop offset="0.9569" stop-color="rgb(18,18,18)"/><stop offset="0.9585" stop-color="rgb(20,20,20)"/><stop offset="0.9600" stop-color="rgb(22,22,22)"/><stop offset="0.9615" stop-color="rgb(23,23,23)"/><stop offset="0.9631" stop-color="rgb(24,24,24)"/><stop offset="0.9646" stop-color="rgb(24,24,24)"/><stop offset="0.9662" stop-color="rgb(22,22,22)"/><stop offset="0.9677" stop-color="rgb(21,21,21)"/><stop offset="0.9692" stop-color="rgb(19,19,19)"/><stop offset="0.9708" stop-color="rgb(18,18,18)"/><stop offset="0.9723" stop-color="rgb(17,17,17)"/><stop offset="0.9738" stop-color="rgb(17,17,17)"/><stop offset="0.9754" stop-color="rgb(17,17,17)"/><stop offset="0.9769" stop-color="rgb(17,17,17)"/><stop offset="0.9785" stop-color="rgb(16,16,16)"/><stop offset="0.9800" stop-color="rgb(15,15,15)"/><stop offset="0.9815" stop-color="rgb(15,15,15)"/><stop offset="0.9831" stop-color="rgb(17,17,17)"/><stop offset="0.9846" stop-color="rgb(19,19,19)"/><stop offset="0.9862" stop-color="rgb(22,22,22)"/><stop offset="0.9877" stop-color="rgb(25,25,25)"/><stop offset="0.9892" stop-color="rgb(26,26,26)"/><stop offset="0.9908" stop-color="rgb(27,27,27)"/><stop offset="0.9923" stop-color="rgb(26,26,26)"/><stop offset="0.9938" stop-color="rgb(25,25,25)"/><stop offset="0.9954" stop-color="rgb(22,22,22)"/><stop offset="0.9969" stop-color="rgb(20,20,20)"/><stop offset="0.9985" stop-color="rgb(18,18,18)"/><stop offset="1.0000" stop-color="rgb(17,17,17)"/></linearGradient>
<clipPath id="sc"><rect x="16" y="68" width="649" height="122"/></clipPath>
<filter id="nz" x="0" y="0" width="100%" height="100%"><feTurbulence type="fractalNoise" baseFrequency="0.55" numOctaves="2" seed="3" result="t"/><feColorMatrix type="matrix" values="0 0 0 0 0.5  0 0 0 0 0.5  0 0 0 0 0.5  1.6 0 0 0 -0.62"/></filter>
<filter id="nz2" x="0" y="0" width="100%" height="100%"><feTurbulence type="fractalNoise" baseFrequency="0.6" numOctaves="2" seed="11" result="t"/><feColorMatrix type="matrix" values="0 0 0 0 0  0 0 0 0 0  0 0 0 0 0  1.6 0 0 0 -0.62"/></filter>
<filter id="bl" x="-5%" y="-5%" width="110%" height="110%"><feGaussianBlur stdDeviation="0.6"/></filter>
<linearGradient id="spec" x1="0" y1="0" x2="1" y2="0"><stop offset="0.0000" stop-color="rgb(0,0,0)"/><stop offset="0.0498" stop-color="rgb(0,0,4)"/><stop offset="0.0569" stop-color="rgb(0,0,118)"/><stop offset="0.0712" stop-color="rgb(0,0,124)"/><stop offset="0.0783" stop-color="rgb(0,5,60)"/><stop offset="0.0925" stop-color="rgb(0,10,60)"/><stop offset="0.0996" stop-color="rgb(0,40,95)"/><stop offset="0.1103" stop-color="rgb(0,45,90)"/><stop offset="0.1174" stop-color="rgb(0,55,65)"/><stop offset="0.1388" stop-color="rgb(0,65,60)"/><stop offset="0.1459" stop-color="rgb(0,100,72)"/><stop offset="0.1673" stop-color="rgb(0,100,70)"/><stop offset="0.1744" stop-color="rgb(0,72,12)"/><stop offset="0.1957" stop-color="rgb(0,72,10)"/><stop offset="0.2028" stop-color="rgb(45,150,0)"/><stop offset="0.2242" stop-color="rgb(50,150,0)"/><stop offset="0.2278" stop-color="rgb(70,112,0)"/><stop offset="0.2384" stop-color="rgb(72,112,0)"/><stop offset="0.2456" stop-color="rgb(170,180,0)"/><stop offset="0.2669" stop-color="rgb(190,180,0)"/><stop offset="0.2705" stop-color="rgb(255,190,0)"/><stop offset="0.2811" stop-color="rgb(255,185,0)"/><stop offset="0.2883" stop-color="rgb(175,85,0)"/><stop offset="0.3025" stop-color="rgb(150,60,0)"/><stop offset="0.3132" stop-color="rgb(120,20,0)"/><stop offset="0.3381" stop-color="rgb(105,0,0)"/><stop offset="0.3488" stop-color="rgb(50,0,0)"/><stop offset="0.3701" stop-color="rgb(38,0,0)"/><stop offset="0.3986" stop-color="rgb(30,0,0)"/><stop offset="0.4413" stop-color="rgb(36,0,0)"/><stop offset="0.4840" stop-color="rgb(28,0,0)"/><stop offset="0.5267" stop-color="rgb(36,0,0)"/><stop offset="0.5623" stop-color="rgb(26,0,0)"/><stop offset="0.5979" stop-color="rgb(32,0,0)"/><stop offset="0.6406" stop-color="rgb(22,0,0)"/><stop offset="0.6833" stop-color="rgb(24,0,0)"/><stop offset="0.7260" stop-color="rgb(8,0,0)"/><stop offset="0.7544" stop-color="rgb(1,0,0)"/><stop offset="1.0000" stop-color="rgb(0,0,0)"/></linearGradient>
</defs>
<g clip-path="url(#sc)"><rect x="16" y="68" width="649" height="122" fill="#101010"/><rect x="-40" y="68" width="800" height="1" fill="url(#sg)" transform="matrix(1.01830,0,0,1,-33.674,0)"/><rect x="-40" y="69" width="800" height="1" fill="url(#sg)" transform="matrix(1.01770,0,0,1,-32.570,0)"/><rect x="-40" y="70" width="800" height="1" fill="url(#sg)" transform="matrix(1.01711,0,0,1,-31.485,0)"/><rect x="-40" y="71" width="800" height="1" fill="url(#sg)" transform="matrix(1.01653,0,0,1,-30.418,0)"/><rect x="-40" y="72" width="800" height="1" fill="url(#sg)" transform="matrix(1.01596,0,0,1,-29.369,0)"/><rect x="-40" y="73" width="800" height="1" fill="url(#sg)" transform="matrix(1.01540,0,0,1,-28.338,0)"/><rect x="-40" y="74" width="800" height="1" fill="url(#sg)" transform="matrix(1.01485,0,0,1,-27.326,0)"/><rect x="-40" y="75" width="800" height="1" fill="url(#sg)" transform="matrix(1.01431,0,0,1,-26.333,0)"/><rect x="-40" y="76" width="800" height="1" fill="url(#sg)" transform="matrix(1.01378,0,0,1,-25.357,0)"/><rect x="-40" y="77" width="800" height="1" fill="url(#sg)" transform="matrix(1.01326,0,0,1,-24.401,0)"/><rect x="-40" y="78" width="800" height="1" fill="url(#sg)" transform="matrix(1.01275,0,0,1,-23.462,0)"/><rect x="-40" y="79" width="800" height="1" fill="url(#sg)" transform="matrix(1.01225,0,0,1,-22.542,0)"/><rect x="-40" y="80" width="800" height="1" fill="url(#sg)" transform="matrix(1.01176,0,0,1,-21.641,0)"/><rect x="-40" y="81" width="800" height="1" fill="url(#sg)" transform="matrix(1.01128,0,0,1,-20.758,0)"/><rect x="-40" y="82" width="800" height="1" fill="url(#sg)" transform="matrix(1.01081,0,0,1,-19.893,0)"/><rect x="-40" y="83" width="800" height="1" fill="url(#sg)" transform="matrix(1.01035,0,0,1,-19.046,0)"/><rect x="-40" y="84" width="800" height="1" fill="url(#sg)" transform="matrix(1.00990,0,0,1,-18.218,0)"/><rect x="-40" y="85" width="800" height="1" fill="url(#sg)" transform="matrix(1.00946,0,0,1,-17.409,0)"/><rect x="-40" y="86" width="800" height="1" fill="url(#sg)" transform="matrix(1.00903,0,0,1,-16.617,0)"/><rect x="-40" y="87" width="800" height="1" fill="url(#sg)" transform="matrix(1.00861,0,0,1,-15.845,0)"/><rect x="-40" y="88" width="800" height="1" fill="url(#sg)" transform="matrix(1.00820,0,0,1,-15.090,0)"/><rect x="-40" y="89" width="800" height="1" fill="url(#sg)" transform="matrix(1.00780,0,0,1,-14.354,0)"/><rect x="-40" y="90" width="800" height="1" fill="url(#sg)" transform="matrix(1.00741,0,0,1,-13.637,0)"/><rect x="-40" y="91" width="800" height="1" fill="url(#sg)" transform="matrix(1.00703,0,0,1,-12.937,0)"/><rect x="-40" y="92" width="800" height="1" fill="url(#sg)" transform="matrix(1.00666,0,0,1,-12.257,0)"/><rect x="-40" y="93" width="800" height="1" fill="url(#sg)" transform="matrix(1.00630,0,0,1,-11.594,0)"/><rect x="-40" y="94" width="800" height="1" fill="url(#sg)" transform="matrix(1.00595,0,0,1,-10.950,0)"/><rect x="-40" y="95" width="800" height="1" fill="url(#sg)" transform="matrix(1.00561,0,0,1,-10.325,0)"/><rect x="-40" y="96" width="800" height="1" fill="url(#sg)" transform="matrix(1.00528,0,0,1,-9.717,0)"/><rect x="-40" y="97" width="800" height="1" fill="url(#sg)" transform="matrix(1.00496,0,0,1,-9.129,0)"/><rect x="-40" y="98" width="800" height="1" fill="url(#sg)" transform="matrix(1.00465,0,0,1,-8.558,0)"/><rect x="-40" y="99" width="800" height="1" fill="url(#sg)" transform="matrix(1.00435,0,0,1,-8.006,0)"/><rect x="-40" y="100" width="800" height="1" fill="url(#sg)" transform="matrix(1.00406,0,0,1,-7.473,0)"/><rect x="-40" y="101" width="800" height="1" fill="url(#sg)" transform="matrix(1.00378,0,0,1,-6.958,0)"/><rect x="-40" y="102" width="800" height="1" fill="url(#sg)" transform="matrix(1.00351,0,0,1,-6.461,0)"/><rect x="-40" y="103" width="800" height="1" fill="url(#sg)" transform="matrix(1.00325,0,0,1,-5.982,0)"/><rect x="-40" y="104" width="800" height="1" fill="url(#sg)" transform="matrix(1.00300,0,0,1,-5.522,0)"/><rect x="-40" y="105" width="800" height="1" fill="url(#sg)" transform="matrix(1.00276,0,0,1,-5.081,0)"/><rect x="-40" y="106" width="800" height="1" fill="url(#sg)" transform="matrix(1.00253,0,0,1,-4.657,0)"/><rect x="-40" y="107" width="800" height="1" fill="url(#sg)" transform="matrix(1.00231,0,0,1,-4.253,0)"/><rect x="-40" y="108" width="800" height="1" fill="url(#sg)" transform="matrix(1.00210,0,0,1,-3.866,0)"/><rect x="-40" y="109" width="800" height="1" fill="url(#sg)" transform="matrix(1.00190,0,0,1,-3.498,0)"/><rect x="-40" y="110" width="800" height="1" fill="url(#sg)" transform="matrix(1.00171,0,0,1,-3.149,0)"/><rect x="-40" y="111" width="800" height="1" fill="url(#sg)" transform="matrix(1.00153,0,0,1,-2.817,0)"/><rect x="-40" y="112" width="800" height="1" fill="url(#sg)" transform="matrix(1.00136,0,0,1,-2.505,0)"/><rect x="-40" y="113" width="800" height="1" fill="url(#sg)" transform="matrix(1.00120,0,0,1,-2.210,0)"/><rect x="-40" y="114" width="800" height="1" fill="url(#sg)" transform="matrix(1.00105,0,0,1,-1.934,0)"/><rect x="-40" y="115" width="800" height="1" fill="url(#sg)" transform="matrix(1.00091,0,0,1,-1.677,0)"/><rect x="-40" y="116" width="800" height="1" fill="url(#sg)" transform="matrix(1.00078,0,0,1,-1.438,0)"/><rect x="-40" y="117" width="800" height="1" fill="url(#sg)" transform="matrix(1.00066,0,0,1,-1.217,0)"/><rect x="-40" y="118" width="800" height="1" fill="url(#sg)" transform="matrix(1.00055,0,0,1,-1.014,0)"/><rect x="-40" y="119" width="800" height="1" fill="url(#sg)" transform="matrix(1.00045,0,0,1,-0.830,0)"/><rect x="-40" y="120" width="800" height="1" fill="url(#sg)" transform="matrix(1.00036,0,0,1,-0.665,0)"/><rect x="-40" y="121" width="800" height="1" fill="url(#sg)" transform="matrix(1.00028,0,0,1,-0.518,0)"/><rect x="-40" y="122" width="800" height="1" fill="url(#sg)" transform="matrix(1.00021,0,0,1,-0.389,0)"/><rect x="-40" y="123" width="800" height="1" fill="url(#sg)" transform="matrix(1.00015,0,0,1,-0.278,0)"/><rect x="-40" y="124" width="800" height="1" fill="url(#sg)" transform="matrix(1.00010,0,0,1,-0.186,0)"/><rect x="-40" y="125" width="800" height="1" fill="url(#sg)" transform="matrix(1.00006,0,0,1,-0.113,0)"/><rect x="-40" y="126" width="800" height="1" fill="url(#sg)" transform="matrix(1.00003,0,0,1,-0.057,0)"/><rect x="-40" y="127" width="800" height="1" fill="url(#sg)" transform="matrix(1.00001,0,0,1,-0.021,0)"/><rect x="-40" y="128" width="800" height="1" fill="url(#sg)" transform="matrix(1.00000,0,0,1,-0.002,0)"/><rect x="-40" y="129" width="800" height="1" fill="url(#sg)" transform="matrix(1.00000,0,0,1,-0.002,0)"/><rect x="-40" y="130" width="800" height="1" fill="url(#sg)" transform="matrix(1.00001,0,0,1,-0.021,0)"/><rect x="-40" y="131" width="800" height="1" fill="url(#sg)" transform="matrix(1.00003,0,0,1,-0.057,0)"/><rect x="-40" y="132" width="800" height="1" fill="url(#sg)" transform="matrix(1.00006,0,0,1,-0.113,0)"/><rect x="-40" y="133" width="800" height="1" fill="url(#sg)" transform="matrix(1.00010,0,0,1,-0.186,0)"/><rect x="-40" y="134" width="800" height="1" fill="url(#sg)" transform="matrix(1.00015,0,0,1,-0.278,0)"/><rect x="-40" y="135" width="800" height="1" fill="url(#sg)" transform="matrix(1.00021,0,0,1,-0.389,0)"/><rect x="-40" y="136" width="800" height="1" fill="url(#sg)" transform="matrix(1.00028,0,0,1,-0.518,0)"/><rect x="-40" y="137" width="800" height="1" fill="url(#sg)" transform="matrix(1.00036,0,0,1,-0.665,0)"/><rect x="-40" y="138" width="800" height="1" fill="url(#sg)" transform="matrix(1.00045,0,0,1,-0.830,0)"/><rect x="-40" y="139" width="800" height="1" fill="url(#sg)" transform="matrix(1.00055,0,0,1,-1.014,0)"/><rect x="-40" y="140" width="800" height="1" fill="url(#sg)" transform="matrix(1.00066,0,0,1,-1.217,0)"/><rect x="-40" y="141" width="800" height="1" fill="url(#sg)" transform="matrix(1.00078,0,0,1,-1.438,0)"/><rect x="-40" y="142" width="800" height="1" fill="url(#sg)" transform="matrix(1.00091,0,0,1,-1.677,0)"/><rect x="-40" y="143" width="800" height="1" fill="url(#sg)" transform="matrix(1.00105,0,0,1,-1.934,0)"/><rect x="-40" y="144" width="800" height="1" fill="url(#sg)" transform="matrix(1.00120,0,0,1,-2.210,0)"/><rect x="-40" y="145" width="800" height="1" fill="url(#sg)" transform="matrix(1.00136,0,0,1,-2.505,0)"/><rect x="-40" y="146" width="800" height="1" fill="url(#sg)" transform="matrix(1.00153,0,0,1,-2.817,0)"/><rect x="-40" y="147" width="800" height="1" fill="url(#sg)" transform="matrix(1.00171,0,0,1,-3.149,0)"/><rect x="-40" y="148" width="800" height="1" fill="url(#sg)" transform="matrix(1.00190,0,0,1,-3.498,0)"/><rect x="-40" y="149" width="800" height="1" fill="url(#sg)" transform="matrix(1.00210,0,0,1,-3.866,0)"/><rect x="-40" y="150" width="800" height="1" fill="url(#sg)" transform="matrix(1.00231,0,0,1,-4.253,0)"/><rect x="-40" y="151" width="800" height="1" fill="url(#sg)" transform="matrix(1.00253,0,0,1,-4.657,0)"/><rect x="-40" y="152" width="800" height="1" fill="url(#sg)" transform="matrix(1.00276,0,0,1,-5.081,0)"/><rect x="-40" y="153" width="800" height="1" fill="url(#sg)" transform="matrix(1.00300,0,0,1,-5.522,0)"/><rect x="-40" y="154" width="800" height="1" fill="url(#sg)" transform="matrix(1.00325,0,0,1,-5.982,0)"/><rect x="-40" y="155" width="800" height="1" fill="url(#sg)" transform="matrix(1.00351,0,0,1,-6.461,0)"/><rect x="-40" y="156" width="800" height="1" fill="url(#sg)" transform="matrix(1.00378,0,0,1,-6.958,0)"/><rect x="-40" y="157" width="800" height="1" fill="url(#sg)" transform="matrix(1.00406,0,0,1,-7.473,0)"/><rect x="-40" y="158" width="800" height="1" fill="url(#sg)" transform="matrix(1.00435,0,0,1,-8.006,0)"/><rect x="-40" y="159" width="800" height="1" fill="url(#sg)" transform="matrix(1.00465,0,0,1,-8.558,0)"/><rect x="-40" y="160" width="800" height="1" fill="url(#sg)" transform="matrix(1.00496,0,0,1,-9.129,0)"/><rect x="-40" y="161" width="800" height="1" fill="url(#sg)" transform="matrix(1.00528,0,0,1,-9.717,0)"/><rect x="-40" y="162" width="800" height="1" fill="url(#sg)" transform="matrix(1.00561,0,0,1,-10.325,0)"/><rect x="-40" y="163" width="800" height="1" fill="url(#sg)" transform="matrix(1.00595,0,0,1,-10.950,0)"/><rect x="-40" y="164" width="800" height="1" fill="url(#sg)" transform="matrix(1.00630,0,0,1,-11.594,0)"/><rect x="-40" y="165" width="800" height="1" fill="url(#sg)" transform="matrix(1.00666,0,0,1,-12.257,0)"/><rect x="-40" y="166" width="800" height="1" fill="url(#sg)" transform="matrix(1.00703,0,0,1,-12.937,0)"/><rect x="-40" y="167" width="800" height="1" fill="url(#sg)" transform="matrix(1.00741,0,0,1,-13.637,0)"/><rect x="-40" y="168" width="800" height="1" fill="url(#sg)" transform="matrix(1.00780,0,0,1,-14.354,0)"/><rect x="-40" y="169" width="800" height="1" fill="url(#sg)" transform="matrix(1.00820,0,0,1,-15.090,0)"/><rect x="-40" y="170" width="800" height="1" fill="url(#sg)" transform="matrix(1.00861,0,0,1,-15.845,0)"/><rect x="-40" y="171" width="800" height="1" fill="url(#sg)" transform="matrix(1.00903,0,0,1,-16.617,0)"/><rect x="-40" y="172" width="800" height="1" fill="url(#sg)" transform="matrix(1.00946,0,0,1,-17.409,0)"/><rect x="-40" y="173" width="800" height="1" fill="url(#sg)" transform="matrix(1.00990,0,0,1,-18.218,0)"/><rect x="-40" y="174" width="800" height="1" fill="url(#sg)" transform="matrix(1.01035,0,0,1,-19.046,0)"/><rect x="-40" y="175" width="800" height="1" fill="url(#sg)" transform="matrix(1.01081,0,0,1,-19.893,0)"/><rect x="-40" y="176" width="800" height="1" fill="url(#sg)" transform="matrix(1.01128,0,0,1,-20.758,0)"/><rect x="-40" y="177" width="800" height="1" fill="url(#sg)" transform="matrix(1.01176,0,0,1,-21.641,0)"/><rect x="-40" y="178" width="800" height="1" fill="url(#sg)" transform="matrix(1.01225,0,0,1,-22.542,0)"/><rect x="-40" y="179" width="800" height="1" fill="url(#sg)" transform="matrix(1.01275,0,0,1,-23.462,0)"/><rect x="-40" y="180" width="800" height="1" fill="url(#sg)" transform="matrix(1.01326,0,0,1,-24.401,0)"/><rect x="-40" y="181" width="800" height="1" fill="url(#sg)" transform="matrix(1.01378,0,0,1,-25.357,0)"/><rect x="-40" y="182" width="800" height="1" fill="url(#sg)" transform="matrix(1.01431,0,0,1,-26.333,0)"/><rect x="-40" y="183" width="800" height="1" fill="url(#sg)" transform="matrix(1.01485,0,0,1,-27.326,0)"/><rect x="-40" y="184" width="800" height="1" fill="url(#sg)" transform="matrix(1.01540,0,0,1,-28.338,0)"/><rect x="-40" y="185" width="800" height="1" fill="url(#sg)" transform="matrix(1.01596,0,0,1,-29.369,0)"/><rect x="-40" y="186" width="800" height="1" fill="url(#sg)" transform="matrix(1.01653,0,0,1,-30.418,0)"/><rect x="-40" y="187" width="800" height="1" fill="url(#sg)" transform="matrix(1.01711,0,0,1,-31.485,0)"/><rect x="-40" y="188" width="800" height="1" fill="url(#sg)" transform="matrix(1.01770,0,0,1,-32.570,0)"/><rect x="-40" y="189" width="800" height="1" fill="url(#sg)" transform="matrix(1.01830,0,0,1,-33.674,0)"/>
<rect x="16" y="68" width="649" height="122" filter="url(#nz)" opacity="0.42"/>
<rect x="16" y="68" width="649" height="122" filter="url(#nz2)" opacity="0.42"/>
<g filter="url(#bl)"><path d="M337.6,68 Q392.4,129 337.6,190" stroke="#fff" stroke-width="2.8" stroke-opacity="0.95" fill="none"/><path d="M374.7,68 Q428.3,129 374.7,190" stroke="#fff" stroke-width="3.3" stroke-opacity="0.95" fill="none"/><path d="M337.6,68 Q392.4,129 337.6,190" stroke="#fff" stroke-width="6" stroke-opacity="0.25" fill="none"/><path d="M374.7,68 Q428.3,129 374.7,190" stroke="#fff" stroke-width="6.5" stroke-opacity="0.25" fill="none"/><path d="M357.7,68 Q411.9,129 357.7,190" stroke="#fff" stroke-width="1.8" stroke-opacity="0.35" fill="none"/><path d="M388.5,68 Q441.5,129 388.5,190" stroke="#fff" stroke-width="2.5" stroke-opacity="0.3" fill="none"/><path d="M406.8,68 Q459.2,129 406.8,190" stroke="#fff" stroke-width="12" stroke-opacity="0.35" fill="none"/><path d="M399.7,68 Q452.3,129 399.7,190" stroke="#fff" stroke-width="5" stroke-opacity="0.25" fill="none"/><path d="M431.3,68 Q482.7,129 431.3,190" stroke="#fff" stroke-width="1.8" stroke-opacity="0.4" fill="none"/><path d="M451.6,68 Q502.4,129 451.6,190" stroke="#fff" stroke-width="1.8" stroke-opacity="0.4" fill="none"/><path d="M579.0,68 Q625.0,129 579.0,190" stroke="#fff" stroke-width="1.6" stroke-opacity="0.4" fill="none"/><path d="M0.9,68 Q68.1,129 0.9,190" stroke="#fff" stroke-width="2.4" stroke-opacity="0.5" fill="none"/><path d="M162.4,68 Q223.6,129 162.4,190" stroke="#fff" stroke-width="2.8" stroke-opacity="0.15" fill="none"/><path d="M233.2,68 Q291.8,129 233.2,190" stroke="#fff" stroke-width="2.8" stroke-opacity="0.18" fill="none"/><path d="M259.1,68 Q316.9,129 259.1,190" stroke="#fff" stroke-width="2.8" stroke-opacity="0.18" fill="none"/></g>
</g>
<g shape-rendering="crispEdges" fill="none">
<path d="M16,118.5 H665 M16,138.5 H665" stroke="#1ee01e" stroke-width="1"/>
<rect x="688" y="69" width="281" height="121" fill="url(#spec)"/>
<rect x="16.5" y="219.5" width="649" height="259" stroke="#e01010"/>
<path d="M17,224.5 H665 M17,474.5 H665 M233.5,225 V474" stroke="#10e010"/>
<rect x="684.5" y="219.5" width="291" height="259" stroke="#e01010"/>
<path d="M685,224.5 H975 M685,474.5 H975 M866.5,225 V474" stroke="#10e010"/>
<path d="M688.5,219 V224 M688.5,474 V479 M728.5,219 V224 M728.5,474 V479 M768.5,219 V224 M768.5,474 V479 M808.5,219 V224 M808.5,474 V479 M848.5,219 V224 M848.5,474 V479 M888.5,219 V224 M888.5,474 V479 M928.5,219 V224 M928.5,474 V479 M968.5,219 V224 M968.5,474 V479 " stroke="#c01010"/>
<path d="M688.5,474.5 L691.5,474.5 L692.5,474.5 L695.5,474.5 L696.5,462.5 L699.5,462.5 L700.5,363.5 L703.5,363.5 L704.5,419.5 L707.5,419.5 L708.5,424.5 L711.5,424.5 L712.5,387.5 L715.5,387.5 L716.5,417.5 L719.5,417.5 L720.5,410.5 L723.5,410.5 L724.5,383.5 L727.5,383.5 L728.5,377.5 L731.5,377.5 L732.5,420.5 L735.5,420.5 L736.5,413.5 L739.5,413.5 L740.5,353.5 L743.5,353.5 L744.5,326.5 L747.5,326.5 L748.5,378.5 L751.5,378.5 L752.5,282.5 L755.5,282.5 L756.5,295.5 L759.5,295.5 L760.5,225.5 L763.5,225.5 L764.5,312.5 L767.5,312.5 L768.5,337.5 L771.5,337.5 L772.5,380.5 L775.5,380.5 L776.5,381.5 L779.5,381.5 L780.5,419.5 L783.5,419.5 L784.5,427.5 L787.5,427.5 L788.5,433.5 L791.5,433.5 L792.5,436.5 L795.5,436.5 L796.5,439.5 L799.5,439.5 L800.5,443.5 L803.5,443.5 L804.5,446.5 L807.5,446.5 L808.5,449.5 L811.5,449.5 L812.5,450.5 L815.5,450.5 L816.5,442.5 L819.5,442.5 L820.5,446.5 L823.5,446.5 L824.5,449.5 L827.5,449.5 L828.5,457.5 L831.5,457.5 L832.5,447.5 L835.5,447.5 L836.5,443.5 L839.5,443.5 L840.5,445.5 L843.5,445.5 L844.5,451.5 L847.5,451.5 L848.5,451.5 L851.5,451.5 L852.5,442.5 L855.5,442.5 L856.5,451.5 L859.5,451.5 L860.5,453.5 L863.5,453.5 L864.5,461.5 L867.5,461.5 L868.5,462.5 L871.5,462.5 L872.5,460.5 L875.5,460.5 L876.5,455.5 L879.5,455.5 L880.5,458.5 L883.5,458.5 L884.5,466.5 L887.5,466.5 L888.5,470.5 L891.5,470.5 L892.5,469.5 L895.5,469.5 L896.5,469.5 L899.5,469.5 L900.5,469.5 L903.5,469.5 L904.5,470.5 L907.5,470.5 L908.5,470.5 L911.5,470.5 L912.5,471.5 L915.5,471.5 L916.5,469.5 L919.5,469.5 L920.5,469.5 L923.5,469.5 L924.5,469.5 L927.5,469.5 L928.5,473.5 L931.5,473.5 L932.5,474.5 L935.5,474.5 L936.5,474.5 L939.5,474.5 L940.5,474.5 L943.5,474.5 L944.5,474.5 L947.5,474.5 L948.5,474.5 L951.5,474.5 L952.5,474.5 L955.5,474.5 L956.5,474.5 L959.5,474.5 L960.5,474.5 L963.5,474.5 L964.5,474.5 L967.5,474.5" stroke="#e01010"/>
</g>
<path d="M16.6,463.1 L17.9,466.4 L19.2,468.2 L20.3,465.8 L21.3,465.1 L22.3,465.4 L23.3,463.1 L24.4,460.4 L25.4,461.0 L26.4,458.2 L27.4,457.9 L28.9,460.0 L30.1,446.6 L31.5,407.7 L32.6,381.0 L33.6,360.5 L34.6,370.8 L35.6,401.5 L36.7,432.3 L37.7,454.8 L39.1,458.9 L40.8,456.9 L42.4,455.9 L43.8,460.0 L44.9,459.7 L45.9,462.0 L46.9,464.7 L47.9,464.1 L49.0,462.3 L50.0,463.1 L51.0,464.9 L52.0,465.1 L53.5,457.9 L55.1,461.0 L56.8,464.1 L57.8,464.1 L58.8,461.0 L59.8,460.7 L60.9,463.1 L61.9,462.1 L62.9,457.9 L63.9,458.1 L65.0,460.0 L66.4,466.1 L67.4,463.3 L68.4,463.1 L69.5,462.3 L70.5,464.1 L71.5,463.8 L72.6,461.0 L73.6,460.8 L74.6,457.9 L75.6,465.1 L76.7,462.8 L77.7,463.1 L78.7,462.8 L79.7,464.1 L80.8,461.8 L81.8,462.0 L82.8,465.0 L83.8,464.7 L85.4,465.7 L86.9,464.1 L88.2,463.5 L89.6,465.5 L90.8,465.9 L92.0,463.1 L93.1,460.2 L94.1,460.0 L95.1,460.2 L96.1,462.0 L97.2,459.9 L98.2,461.0 L99.2,460.4 L100.2,463.1 L101.3,463.6 L102.3,461.0 L103.3,459.2 L104.3,460.0 L105.4,463.1 L106.4,463.1 L107.4,464.1 L108.4,462.0 L109.5,462.8 L110.5,461.0 L111.5,460.7 L112.5,463.1 L113.6,461.7 L114.6,462.0 L115.6,461.8 L116.6,464.1 L117.7,464.1 L118.7,461.0 L119.7,459.7 L120.7,460.0 L121.8,462.3 L122.8,463.1 L123.8,463.3 L124.8,461.0 L125.9,461.2 L126.9,463.1 L127.9,464.1 L128.9,462.0 L130.0,462.3 L131.0,465.1 L132.0,465.7 L133.1,463.1 L134.1,462.8 L135.1,461.0 L136.1,463.1 L137.2,462.0 L138.2,458.9 L139.2,458.9 L140.2,461.2 L141.3,465.1 L142.3,461.8 L143.3,461.0 L144.3,462.1 L145.4,460.0 L146.4,464.1 L147.4,465.1 L148.4,463.5 L149.5,465.1 L150.5,462.8 L151.5,462.0 L152.5,460.8 L153.6,457.9 L154.6,457.1 L155.6,458.9 L156.6,461.1 L157.7,460.0 L158.7,457.9 L159.7,458.9 L160.7,458.7 L161.8,461.0 L162.8,461.6 L163.8,458.9 L165.5,447.7 L166.9,449.7 L167.9,450.5 L168.9,453.8 L170.0,454.8 L171.0,455.9 L172.1,457.9 L173.0,457.9 L174.1,461.0 L175.1,462.0 L176.2,463.1 L177.1,463.1 L178.2,458.9 L178.6,457.9 L180.3,456.9 L181.3,457.5 L182.3,454.8 L183.3,455.1 L184.4,456.9 L186.0,450.7 L187.4,442.5 L189.5,430.2 L190.5,428.5 L191.5,424.1 L193.0,432.3 L194.6,446.6 L196.7,454.8 L197.7,456.3 L198.7,461.0 L199.7,463.6 L200.8,463.1 L202.4,456.9 L203.8,451.8 L205.3,456.9 L206.9,458.9 L207.9,461.3 L209.0,461.0 L210.6,464.1 L211.6,463.3 L212.7,461.0 L213.9,461.8 L215.1,460.0 L216.3,459.0 L217.6,454.8 L218.6,454.1 L219.6,450.7 L220.7,452.1 L221.7,451.8 L222.7,452.1 L223.7,450.7 L224.8,451.0 L225.8,452.8 L226.8,451.5 L227.8,451.8 L228.9,451.2 L229.9,453.8 L231.5,454.8 L233.2,448.7 L234.6,460.0 L236.0,454.8 L237.1,453.5 L238.1,453.8 L239.1,452.0 L240.1,452.8 L241.2,453.9 L242.2,451.8 L243.2,453.6 L244.2,453.8 L245.3,457.0 L246.3,456.9 L247.3,457.2 L248.3,454.8 L249.6,447.7 L250.4,452.8 L252.0,451.8 L253.3,452.1 L254.5,450.7 L255.5,447.6 L256.5,447.7 L258.2,442.5 L259.8,422.0 L261.3,405.6 L262.3,403.6 L263.3,409.7 L264.7,426.1 L266.4,442.5 L268.4,451.8 L269.5,452.6 L270.5,450.7 L272.1,446.6 L273.6,445.6 L275.0,450.7 L276.6,453.8 L278.3,451.8 L279.7,456.9 L280.7,450.7 L282.4,440.5 L283.4,438.2 L284.4,434.3 L285.9,411.8 L286.9,391.3 L287.5,384.1 L288.5,393.3 L290.0,411.8 L291.4,428.2 L293.1,440.5 L294.1,445.2 L295.1,446.6 L297.2,460.0 L298.2,456.1 L299.2,454.8 L301.3,446.6 L302.3,442.3 L303.3,440.5 L304.9,446.6 L306.4,456.9 L307.4,458.0 L308.4,455.9 L309.5,456.7 L310.5,454.8 L311.5,452.0 L312.5,450.7 L313.6,449.5 L314.6,446.6 L315.6,444.8 L316.6,444.6 L317.7,447.9 L318.7,448.7 L319.7,452.6 L320.7,453.8 L321.8,451.0 L322.8,450.7 L323.8,450.2 L324.8,452.8 L325.9,450.0 L326.9,449.7 L327.9,452.3 L328.9,451.8 L330.0,449.7 L331.2,450.3 L332.5,447.7 L333.5,450.0 L334.5,450.7 L335.9,451.0 L337.2,449.7 L338.5,446.5 L339.8,446.6 L341.9,436.4 L343.9,425.1 L344.9,428.4 L346.0,430.2 L348.5,441.5 L351.5,433.3 L352.9,432.4 L354.2,428.2 L356.7,411.8 L357.7,411.1 L358.7,407.7 L360.8,399.5 L362.4,376.9 L362.9,314.4 L364.0,262.8 L364.4,252.3 L365.0,272.3 L365.5,335.4 L366.7,350.0 L367.3,381.0 L369.4,401.5 L371.0,422.0 L373.1,410.8 L375.1,417.9 L377.6,428.2 L378.9,430.3 L380.2,429.2 L381.7,415.9 L382.9,391.3 L384.3,373.8 L385.4,401.5 L387.0,426.1 L389.1,436.4 L390.3,435.7 L391.5,432.3 L393.1,427.9 L394.6,426.1 L396.7,407.7 L398.4,370.8 L398.8,324.0 L399.2,264.7 L401.3,224.5 L402.2,253.2 L402.6,308.6 L403.6,335.0 L404.2,360.5 L405.9,391.3 L407.9,416.9 L408.9,416.6 L410.0,419.0 L411.0,401.5 L412.0,364.6 L414.1,351.3 L415.7,348.2 L417.2,358.5 L418.6,377.9 L420.2,370.8 L421.9,352.3 L423.3,327.6 L425.2,309.5 L426.7,314.2 L428.2,315.2 L430.2,300.9 L432.4,289.4 L433.4,277.0 L434.4,279.2 L435.3,279.9 L436.3,291.3 L438.2,310.4 L441.0,329.5 L443.9,350.0 L444.8,360.5 L447.9,374.9 L451.0,389.2 L452.0,390.0 L453.0,388.2 L454.1,370.8 L455.1,340.0 L456.3,329.5 L457.2,340.0 L459.2,366.7 L461.3,359.5 L463.3,381.0 L465.4,406.7 L467.0,396.4 L468.2,396.3 L469.5,399.5 L470.5,396.3 L471.5,396.4 L472.6,398.2 L473.6,402.6 L474.8,391.3 L476.0,350.3 L476.6,342.0 L477.7,352.3 L478.7,391.3 L479.7,417.9 L481.8,403.6 L483.8,411.8 L485.9,421.0 L486.9,421.2 L487.9,424.1 L489.6,432.3 L490.8,427.6 L492.0,426.1 L493.1,426.5 L494.1,430.2 L495.7,432.3 L496.5,423.1 L498.2,427.2 L499.1,429.0 L500.0,429.2 L501.0,426.6 L502.1,427.2 L503.1,430.8 L504.1,431.3 L505.1,430.7 L506.2,433.3 L507.2,435.1 L508.2,434.3 L509.2,437.2 L510.3,438.4 L511.9,430.2 L512.9,425.8 L513.9,424.5 L515.0,428.7 L516.0,430.2 L517.0,431.2 L518.0,435.4 L519.3,435.9 L520.5,434.7 L521.5,433.2 L522.6,434.3 L523.6,433.3 L524.6,429.6 L525.6,433.3 L526.7,435.4 L527.7,437.1 L528.7,440.5 L529.7,439.5 L530.8,435.4 L532.4,433.3 L533.4,433.6 L534.5,436.4 L535.5,440.8 L536.5,442.5 L537.5,438.2 L538.6,436.4 L539.6,436.1 L540.6,437.4 L541.6,439.8 L542.7,440.5 L543.7,438.7 L544.7,438.4 L545.7,439.9 L546.8,444.6 L547.8,445.3 L548.8,447.7 L550.9,436.4 L551.9,434.6 L552.9,430.2 L553.9,430.0 L555.0,427.2 L556.2,425.4 L557.4,421.0 L558.4,421.2 L559.5,424.1 L560.5,426.4 L561.5,430.2 L564.0,439.5 L565.0,437.7 L566.0,433.3 L567.1,435.1 L568.1,434.3 L569.1,434.9 L570.1,432.3 L572.2,442.5 L574.2,449.7 L575.3,448.0 L576.3,444.6 L578.3,430.2 L580.4,423.1 L581.7,419.7 L583.1,417.9 L584.1,419.0 L585.1,417.5 L586.1,418.3 L587.2,415.9 L588.2,418.9 L589.2,420.4 L590.2,420.1 L591.3,423.1 L592.3,424.7 L593.3,423.7 L595.0,430.2 L596.8,440.5 L598.4,438.4 L600.1,420.0 L600.9,395.4 L602.1,381.0 L603.2,395.4 L604.2,417.9 L605.6,428.2 L606.6,425.9 L607.7,422.0 L608.7,422.0 L609.7,425.1 L610.7,424.9 L611.8,422.0 L613.8,432.3 L615.9,446.6 L616.9,444.8 L617.9,444.6 L618.9,444.3 L620.0,445.6 L621.0,444.8 L622.0,446.6 L624.1,436.4 L626.7,421.0 L627.8,422.8 L628.8,426.1 L629.8,428.4 L630.8,432.3 L632.9,448.7 L635.4,463.1 L636.4,462.3 L637.4,463.1 L638.4,459.4 L639.5,458.9 L641.0,457.1 L642.5,456.9 L644.1,457.1 L645.6,460.0 L647.1,462.8 L648.7,463.1 L649.7,463.6 L650.7,461.0 L651.8,461.7 L652.8,464.1 L653.8,464.4 L654.8,463.1 L656.2,460.8 L657.5,456.9 L659.2,454.6 L661.0,454.8 L662.0,456.1 L663.0,458.9 L664.2,461.8 L665.3,462.0" fill="none" stroke="#e01010" stroke-width="1" shape-rendering="crispEdges"/>

<g id="chrome">
<rect x="930" y="19" width="7" height="3" fill="#fff"/>
<rect x="953" y="11" width="11" height="3" fill="#fff"/><rect x="953.5" y="11.5" width="10" height="10" fill="none" stroke="#fff"/>
<path d="M976.5,11.5 L986.5,21.5 M986.5,11.5 L976.5,21.5" stroke="#fff" stroke-width="2.2" fill="none"/>
<g>
<rect x="7.5" y="9.5" width="13" height="13" fill="#3468d8" stroke="#9cc4f8" stroke-width="1"/>
<rect x="8" y="10" width="4" height="3.5" fill="#1f55c8"/>
<rect x="8" y="20" width="2" height="2" fill="#2048b0"/><rect x="11" y="20" width="2" height="2" fill="#2048b0"/><rect x="14" y="19.5" width="4" height="2.5" fill="#6f8fe0"/><rect x="19" y="19" width="1.5" height="3" fill="#2048b0"/>
<rect x="13" y="10" width="7" height="7" fill="#e0b030"/><rect x="14.2" y="11" width="4.5" height="4" fill="#f8d848"/>
<rect x="8" y="14" width="4" height="4.6" fill="#c02828"/><rect x="9" y="15" width="1.5" height="2" fill="#e86060"/>
</g>
<rect x="927" y="501" width="16" height="181" fill="#f6f6f1"/>
<rect x="927.5" y="502.5" width="14" height="15" rx="2" fill="#c4d5fc" stroke="#fff"/>
<path d="M930.5,512.5 L934.5,508.5 L938.5,512.5" stroke="#4d6185" stroke-width="2.2" fill="none"/>
<rect x="927.5" y="519.5" width="14" height="29" rx="2" fill="#c4d5fc" stroke="#fff"/>
<path d="M931.5,530.5 H938 M931.5,532.5 H938 M931.5,534.5 H938 M931.5,536.5 H938" stroke="#e8f0ff" stroke-width="1" fill="none"/>
<path d="M932,531.5 H938.5 M932,533.5 H938.5 M932,535.5 H938.5 M932,537.5 H938.5" stroke="#8aa4e0" stroke-width="1" fill="none" opacity="0.7"/>
<rect x="927.5" y="665.5" width="14" height="14" rx="2" fill="#c4d5fc" stroke="#fff"/>
<path d="M930.5,670.5 L934.5,674.5 L938.5,670.5" stroke="#4d6185" stroke-width="2.2" fill="none"/>
</g>
</svg>
</div>
</body></html>
